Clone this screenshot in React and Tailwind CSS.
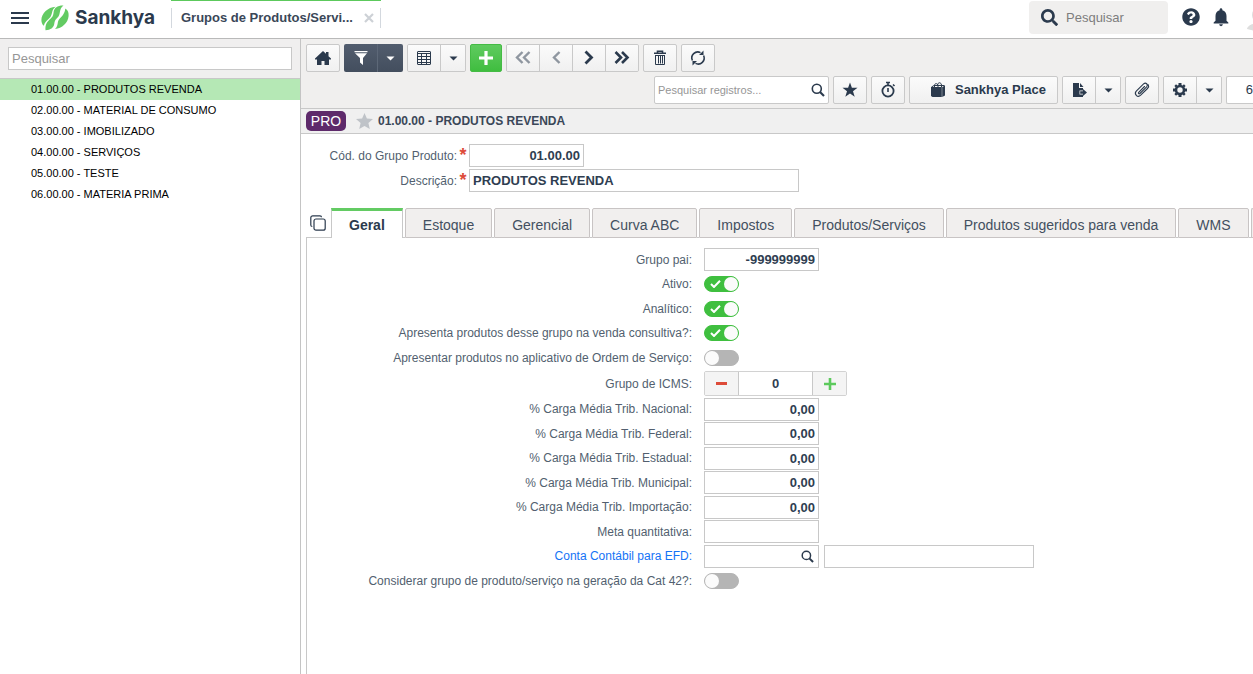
import React, { useState } from "react";
import { FaSearch, FaQuestionCircle } from "react-icons/fa";
import { MdNotifications } from "react-icons/md";

const INK = "#2b3a4d";

/* ---------- icons ---------- */

const Logo = () => (
  <svg width="28" height="26" viewBox="0 0 28 26" fill="#63cb63" aria-hidden="true">
    <path d="M14.500 1.800C7 2.200.4 8.500.4 15c0 2.600.8 4.400 2.400 5.800.8-4 3.700-5.800 6-8.100C12 9.500 9.800 5.500 14.500 1.800z" />
    <path d="M22.500.5C16.500.3 13.300 3 12.700 6.500c-.5 3.300-.3 4.600-3.200 7.200C6.300 16.600 4 19 4.500 25.300c5.300-.3 8-2.700 8.700-6 .6-3.200.6-4.200 3.400-6.800C20.200 9 17.300 4.500 22.500.5z" />
    <path d="M24.300 3.500c3 1.700 3.500 4.500 3.300 7.500-.6 7-6.500 12.300-13.600 13 4-3.500 1.500-7.200 4.800-10.500C21.500 10.700 23.800 8.500 24.300 3.500z" />
  </svg>
);

const Svg = ({ s = 18, children }) => (
  <svg width={s} height={s} viewBox="0 0 18 18" fill="none" stroke="currentColor" strokeWidth="2" aria-hidden="true">
    {children}
  </svg>
);

const HomeIcon = () => (
  <Svg>
    <path fill="currentColor" stroke="none" d="M9 2 12 4.800V3h2.500v4.200L17 9.500V10.500h-2V16h-4.500v-4h-3v4H3v-5.500H1V9.500z" />
  </Svg>
);
const FunnelIcon = () => (
  <Svg>
    <path fill="currentColor" stroke="none" d="M2.500 2h13v1.200h-13zM3 4.200h12L11 9v7l-3-2.500V9z" />
  </Svg>
);
const GridIcon = () => (
  <Svg>
    <rect x="2.500" y="2.500" width="13" height="13" rx="0.500" strokeWidth="1" />
    <path strokeWidth="1" d="M2.500 4.500h13M2.500 7.500h13M2.500 10.500h13M2.500 13.500h13M6.500 4.500v11M11.500 4.500v11" />
  </Svg>
);
const Caret = () => (
  <svg width="9" height="5" viewBox="0 0 9 5" fill="currentColor" aria-hidden="true">
    <path d="M0.500 0.500h8L4.500 4.500z" />
  </svg>
);
const PlusIcon = () => (
  <Svg>
    <path strokeWidth="3.200" d="M9 2v14M2 9h14" />
  </Svg>
);
const FirstIcon = () => (
  <Svg>
    <path strokeWidth="2.400" d="M8.500 3 3 8.500 8.500 14M15.500 3 10 8.500l5.500 5.500" />
  </Svg>
);
const PrevIcon = () => (
  <Svg>
    <path strokeWidth="2.400" d="M12.500 3 7 8.500l5.500 5.500" />
  </Svg>
);
const NextIcon = () => (
  <Svg>
    <path strokeWidth="2.800" d="m5.500 2.500 6 6-6 6" />
  </Svg>
);
const LastIcon = () => (
  <Svg>
    <path strokeWidth="2.600" d="M2.500 3 8 8.500 2.500 14M9 3l5.500 5.500L9 14" />
  </Svg>
);
const TrashIcon = () => (
  <Svg>
    <path strokeWidth="1.600" d="M3 4.300h12M6.500 4.500V2.300h5v2.200" />
    <path strokeWidth="1" d="M4.500 6v9.500h9V6M7.500 6.500v8M9.500 6.500v8M11.500 6.500v8M4 6.500h10" />
  </Svg>
);
const RefreshIcon = () => (
  <Svg>
    <path strokeWidth="1.600" d="M3.400 11.500A6 6 0 0 1 11.500 3.600M14.600 6.500A6 6 0 0 1 6.500 14.400" />
    <path fill="currentColor" stroke="none" d="M10 6h4.500V1.500zM8 12H3.500v4.500z" />
  </Svg>
);
const TimerIcon = () => (
  <Svg>
    <circle cx="9" cy="10" r="5.600" strokeWidth="1.800" />
    <path strokeWidth="1.600" d="M9 7v4M7 1.500h4M9 1.500v3M14 3.500l1.500 1.500" />
  </Svg>
);
const BagIcon = () => (
  <Svg>
    <path fill="currentColor" stroke="none" d="M2 6h10.800v10H3.500L2 15zM13.200 6 16 4.500v10L13.200 16z" />
    <path strokeWidth="1" d="M2.500 6 5 4.500h10.500M5.500 6V4.500C5.500 2 8.500 2 9 4.500V6M8.500 4C9 1 12 1 12.500 4v2" />
  </Svg>
);
const ExportIcon = () => (
  <Svg>
    <path fill="currentColor" stroke="none" d="M3 2h6v5h4v2.500H9.500v4H13v2.500H3zM10 2l3.500 4H10zM13 8l4 3.500-4 3.500v-2.300h-2.800v-2.400H13z" />
  </Svg>
);
const ClipIcon = () => (
  <Svg>
    <path
      strokeWidth="1.100"
      strokeLinecap="round"
      d="m11.500 5.500-5.800 5.800c-.8.800.3 2 1.200 1.200l6.700-6.700c2-2.200-.8-5-3-2.900L3.500 9.900c-3 3 1 7.200 4.200 4.300l6.800-6.700c1-1 1.500-2.500.8-3.700"
    />
  </Svg>
);
const GearIcon = () => (
  <Svg>
    <circle cx="9" cy="9" r="4" strokeWidth="2.600" />
    <path strokeWidth="3" d="M9 2v2.500M9 13.500V16M2 9h2.500M13.500 9H16" />
    <path strokeWidth="2.400" d="m4.200 4.200 1.500 1.500M12.300 12.300l1.500 1.500M13.800 4.200l-1.500 1.500M5.700 12.300l-1.500 1.500" />
  </Svg>
);
const LensIcon = ({ s = 14 }) => (
  <svg width={s} height={s} viewBox="0 0 14 14" fill="none" stroke={INK} aria-hidden="true">
    <circle cx="5.800" cy="5.800" r="4.500" strokeWidth="1.600" />
    <path strokeWidth="2.200" d="m9 9 4 4" />
  </svg>
);
const CopyIcon = () => (
  <svg width="16" height="16" viewBox="0 0 16 16" fill="none" stroke={INK} strokeWidth="1.200" aria-hidden="true">
    <rect x="4" y="4" width="11.200" height="11.200" rx="2" />
    <path d="M2.300 11.500C1.300 11.500.8 10.800.8 10V2.800c0-1.200.8-2 2-2H10c.9 0 1.500.6 1.500 1.500" />
  </svg>
);

/* ---------- building blocks ---------- */

const face = "flex items-center justify-center bg-linear-to-b from-[#fbfbfb] to-[#f0f0f0] text-[#2b3a4d]";

const Btn = ({ label, className = "w-[34px]", children }) => (
  <button type="button" aria-label={label} className={`${face} h-7 shrink-0 rounded-xs border border-[#c9c9c9] ${className}`}>
    {children}
  </button>
);

const SplitBtn = ({ label, children }) => (
  <div className="flex h-7 w-[59px] shrink-0 overflow-hidden rounded-xs border border-[#c9c9c9]">
    <button type="button" aria-label={label} className={`${face} w-[33px] border-r border-[#c9c9c9]`}>
      {children}
    </button>
    <button type="button" aria-label={`${label}: opções`} className={`${face} flex-1`}>
      <Caret />
    </button>
  </div>
);

const field = "h-[23px] border border-[#c8c8c8] bg-white px-[3px] text-[13px] font-bold text-[#2f3e51] outline-none";

const Toggle = ({ id, on }) => {
  const [checked, setChecked] = useState(on);
  return (
    <span className="relative flex h-4 w-[35px]">
      <input
        id={id}
        type="checkbox"
        role="switch"
        checked={checked}
        onChange={(e) => setChecked(e.target.checked)}
        className="peer h-4 w-[35px] appearance-none rounded-full border border-[#b5b5b5] bg-[#b5b5b5] checked:border-[#3fbf3f] checked:bg-[#3fbf3f]"
      />
      <span className="pointer-events-none absolute top-px left-px size-3.5 rounded-full bg-[#fbfbfb] peer-checked:left-5" />
      {checked && (
        <svg className="pointer-events-none absolute top-1 left-1.5" width="11" height="8" viewBox="0 0 11 8" fill="none" stroke="#fff" strokeWidth="2" aria-hidden="true">
          <path d="M1 4l3 3 6-6.300" />
        </svg>
      )}
    </span>
  );
};

const Row = ({ id, label, h = "h-6", link, children }) => (
  <div className={`flex items-center gap-3 ${h}`}>
    <label htmlFor={id} className={`w-[385px] shrink-0 text-right text-xs ${link ? "text-[#1473f6]" : "text-[#525f6f]"}`}>
      {label}
    </label>
    {children}
  </div>
);

const groups = [
  "01.00.00 - PRODUTOS REVENDA",
  "02.00.00 - MATERIAL DE CONSUMO",
  "03.00.00 - IMOBILIZADO",
  "04.00.00 - SERVIÇOS",
  "05.00.00 - TESTE",
  "06.00.00 - MATERIA PRIMA",
];

const tabs = ["Geral", "Estoque", "Gerencial", "Curva ABC", "Impostos", "Produtos/Serviços", "Produtos sugeridos para venda", "WMS"];

const rates = [
  ["nacional", "% Carga Média Trib. Nacional:", "h-6"],
  ["federal", "% Carga Média Trib. Federal:", "h-[25px]"],
  ["estadual", "% Carga Média Trib. Estadual:", "h-6"],
  ["municipal", "% Carga Média Trib. Municipal:", "h-[25px]"],
  ["importacao", "% Carga Média Trib. Importação:", "h-6"],
];

const Header = () => (
  <header className="flex h-[39px] shrink-0 items-start border-b border-[#b9b9b9] bg-white">
    <button type="button" aria-label="Menu" className="mt-3 ml-[11px] flex w-[18px] flex-col gap-[3px]">
      <span className="h-0.5 bg-[#2b3a4d]" />
      <span className="h-0.5 bg-[#2b3a4d]" />
      <span className="h-0.5 bg-[#2b3a4d]" />
    </button>
    <a href="#" className="mt-[5px] ml-3 flex h-[26px] w-[130px] shrink-0 items-center gap-1.5">
      <Logo />
      <span className="font-['Inter',sans-serif] text-[19px] leading-6 font-bold text-[#2b3a4d]">Sankhya</span>
    </a>
    <div className="flex h-9 w-[210px] shrink-0 border-t border-[#5cc95c]">
      <div className="mt-[7px] flex h-5 flex-1 items-center justify-between border-x border-[#d3d8de] pr-1.5 pl-[9px]">
        <span className="text-[13px] font-bold text-[#3a4758]">Grupos de Produtos/Servi...</span>
        <button type="button" aria-label="Fechar aba" className="text-[#cdd1d6]">
          <svg width="10" height="10" viewBox="0 0 10 10" stroke="currentColor" strokeWidth="2.200" aria-hidden="true">
            <path d="m1 1 8 8M9 1 1 9" />
          </svg>
        </button>
      </div>
    </div>
    <div className="ml-auto flex shrink-0 items-center text-[#2b3a4d]">
      <label className="mt-px flex h-[33px] w-[139px] items-center gap-2 rounded-sm bg-[#f0efee] pl-3">
        <FaSearch size={17} className="shrink-0" />
        <input placeholder="Pesquisar" aria-label="Pesquisar" className="w-24 bg-transparent text-[13px] outline-none placeholder:text-[#7d7d7d]" />
      </label>
      <button type="button" aria-label="Ajuda" className="ml-[14px]">
        <FaQuestionCircle size={18} />
      </button>
      <button type="button" aria-label="Notificações" className="ml-2.5">
        <MdNotifications size={22} />
      </button>
      <span className="ml-[15px] h-8 w-1.5 overflow-hidden">
        <svg width="26" height="32" viewBox="0 0 26 32" fill="#dedede" aria-hidden="true">
          <circle cx="13" cy="14" r="8" />
          <path d="M0 28c0-2 3-4.500 6-5h12c4 1 7 3 7 5l-12 3z" />
        </svg>
      </span>
    </div>
  </header>
);

const Sidebar = () => (
  <aside className="flex w-[301px] shrink-0 flex-col border-r border-[#c4c4c4] bg-white">
    <div className="flex h-10 items-center border-b border-[#c8c8c8] bg-[#f0efef] px-2">
      <input
        aria-label="Pesquisar grupos"
        placeholder="Pesquisar"
        className="h-[23px] w-full border border-[#c8c8c8] bg-white px-[3px] text-[13px] outline-none placeholder:text-[#969696]"
      />
    </div>
    <ul>
      {groups.map((g, i) => (
        <li key={g}>
          <a href="#" className={`block h-[21px] pl-[31px] text-[11px] leading-[21px] text-black ${i === 0 ? "bg-[#b5e8b5]" : ""}`}>
            {g}
          </a>
        </li>
      ))}
    </ul>
  </aside>
);

const Toolbar = () => (
  <div className="flex flex-col gap-1 border-b border-[#c8c8c8] bg-[#f0efee] pt-[5px] pb-1">
    <div className="flex gap-1 pl-[5px]">
      <Btn label="Início"><HomeIcon /></Btn>
      <div className="flex h-7 w-[59px] shrink-0 overflow-hidden rounded-xs bg-linear-to-b from-[#525d6e] to-[#434e5e] text-white">
        <button type="button" aria-label="Filtro" className="flex w-[34px] items-center justify-center border-r border-[#5d6878]"><FunnelIcon /></button>
        <button type="button" aria-label="Filtro: opções" className="flex flex-1 items-center justify-center"><Caret /></button>
      </div>
      <SplitBtn label="Modo grade"><GridIcon /></SplitBtn>
      <button type="button" aria-label="Adicionar" className="flex h-7 w-8 items-center justify-center rounded-xs border border-[#45bb45] bg-linear-to-b from-[#5fcb5f] to-[#3fbd3f] text-white">
        <PlusIcon />
      </button>
      <div className="flex h-7 w-[133px] shrink-0 divide-x divide-[#c9c9c9] overflow-hidden rounded-xs border border-[#c9c9c9]">
        <button type="button" disabled aria-label="Primeiro" className={`${face} flex-1`}><span className="opacity-50"><FirstIcon /></span></button>
        <button type="button" disabled aria-label="Anterior" className={`${face} flex-1`}><span className="opacity-50"><PrevIcon /></span></button>
        <button type="button" aria-label="Próximo" className={`${face} flex-1`}><NextIcon /></button>
        <button type="button" aria-label="Último" className={`${face} flex-1`}><LastIcon /></button>
      </div>
      <Btn label="Excluir"><TrashIcon /></Btn>
      <Btn label="Atualizar"><RefreshIcon /></Btn>
    </div>
    <div className="flex justify-end gap-1">
      <label className="flex h-7 w-[175px] shrink-0 items-center rounded-xs border border-[#c9c9c9] bg-white pr-[3px] pl-[3px]">
        <input aria-label="Pesquisar registros" placeholder="Pesquisar registros..." className="min-w-0 flex-1 text-[11px] outline-none placeholder:text-[#969696]" />
        <LensIcon />
      </label>
      <Btn label="Favorito">
        <Svg>
          <path fill="currentColor" stroke="none" d="m9 1.500 1.900 5.300h5.600l-4.500 3.400 1.700 5.500L9 12.400l-4.700 3.300L6 10.200 1.500 6.800h5.600z" />
        </Svg>
      </Btn>
      <Btn label="Cronômetro"><TimerIcon /></Btn>
      <Btn label="Sankhya Place" className="w-[149px] gap-2 pl-2">
        <BagIcon />
        <span className="text-[13px] font-bold">Sankhya Place</span>
      </Btn>
      <SplitBtn label="Exportar"><ExportIcon /></SplitBtn>
      <Btn label="Anexos"><ClipIcon /></Btn>
      <SplitBtn label="Configurações"><GearIcon /></SplitBtn>
      <div className="flex h-7 w-[27px] shrink-0 items-center justify-end rounded-l-xs border border-r-0 border-[#c9c9c9] bg-white text-[13px] text-[#2b3a4d]">6</div>
    </div>
  </div>
);

export default function App() {
  const [qty, setQty] = useState(0);
  return (
    <div className="flex min-h-screen flex-col overflow-hidden bg-white font-['Liberation_Sans',Arial,sans-serif]">
      <Header />
      <div className="flex flex-1">
        <Sidebar />
        <main className="flex min-w-0 flex-1 flex-col">
          <Toolbar />
          <div className="flex h-[25px] items-center border-b border-[#c8c8c8] bg-[#f0f0f0] pl-[5px]">
            <span className="flex h-5 w-10 items-center justify-center rounded-[5px] bg-[#5e2a6b] text-sm text-white">PRO</span>
            <button type="button" aria-label="Favoritar registro" className="ml-2.5 text-[#bfc3c8]">
              <svg width="17" height="17" viewBox="0 0 17 17" fill="currentColor" aria-hidden="true">
                <path d="m8.500 0 2.400 5.600 6.100.5-4.600 4 1.400 6-5.300-3.200-5.300 3.200 1.400-6L0 6.100l6.100-.5z" />
              </svg>
            </button>
            <h1 className="ml-[5px] text-xs font-bold text-[#3a4758]">01.00.00 - PRODUTOS REVENDA</h1>
          </div>

          <form className="flex flex-1 flex-col pt-2.5" onSubmit={(e) => e.preventDefault()}>
            <div className="flex flex-col gap-0.5">
              <div className="flex items-center">
                <label htmlFor="codigo" className="w-[156px] text-right text-xs text-[#525f6f]">Cód. do Grupo Produto:</label>
                <span className="w-3 text-center text-lg leading-[23px] font-bold text-[#dd4b39]">*</span>
                <input id="codigo" defaultValue="01.00.00" className={`${field} w-[115px] text-right`} />
              </div>
              <div className="flex items-center">
                <label htmlFor="descricao" className="w-[156px] text-right text-xs text-[#525f6f]">Descrição:</label>
                <span className="w-3 text-center text-lg leading-[23px] font-bold text-[#dd4b39]">*</span>
                <input id="descricao" defaultValue="PRODUTOS REVENDA" className={`${field} w-[330px]`} />
              </div>
            </div>

            <div className="mt-4 ml-[5px] flex overflow-hidden">
              <button type="button" aria-label="Duplicar" className="flex w-[25px] shrink-0 items-center border-b border-[#c8c8c8] pl-1"><CopyIcon /></button>
              <div role="tablist" className="flex min-w-0 flex-1">
                {tabs.map((t, i) => (
                  <React.Fragment key={t}>
                    <button
                      type="button"
                      role="tab"
                      aria-selected={i === 0}
                      className={
                        i === 0
                          ? "h-[30px] shrink-0 border-x border-t-3 border-x-[#c8c8c8] border-t-[#63cb63] bg-white px-[17px] text-sm font-bold text-[#2b3a4d]"
                          : "h-[30px] shrink-0 rounded-t-xs border border-[#c8c4c4] bg-[#f1efee] px-[17px] pt-1 text-sm text-[#434f60]"
                      }
                    >
                      {t}
                    </button>
                    <span className="w-0.5 shrink-0 border-b border-[#c8c8c8]" />
                  </React.Fragment>
                ))}
                <button type="button" role="tab" aria-selected={false} aria-label="Próxima aba" className="h-[30px] flex-1 rounded-tl-xs border border-r-0 border-[#c8c4c4] bg-[#f1efee]" />
              </div>
            </div>

            <section className="ml-[5px] flex flex-1 flex-col border-l border-[#c8c8c8] pt-[9px]">
              <Row id="pai" label="Grupo pai:" h="h-[25px]">
                <input id="pai" defaultValue="-999999999" className={`${field} w-[115px] text-right`} />
              </Row>
              <Row id="ativo" label="Ativo:"><Toggle id="ativo" on /></Row>
              <Row id="analitico" label="Analítico:" h="h-[25px]"><Toggle id="analitico" on /></Row>
              <Row id="venda" label="Apresenta produtos desse grupo na venda consultiva?:"><Toggle id="venda" on /></Row>
              <Row id="ordem" label="Apresentar produtos no aplicativo de Ordem de Serviço:" h="h-[25px]"><Toggle id="ordem" on={false} /></Row>
              <Row id="icms" label="Grupo de ICMS:" h="h-[27px]">
                <div className="flex h-[25px] w-[143px] overflow-hidden rounded-xs border border-[#d2d2d2]">
                  <button type="button" aria-label="Diminuir" onClick={() => setQty(qty - 1)} className="flex w-[33px] items-center justify-center bg-[#f4f4f4]">
                    <span className="h-[3px] w-[11px] bg-[#dd4b39]" />
                  </button>
                  <input id="icms" value={qty} onChange={(e) => setQty(Number(e.target.value) || 0)} className="w-[75px] border-x border-[#c8c8c8] bg-white text-center text-[13px] font-bold text-[#2f3e51] outline-none" />
                  <button type="button" aria-label="Aumentar" onClick={() => setQty(qty + 1)} className="flex w-[33px] items-center justify-center bg-[#f4f4f4]">
                    <svg width="12" height="12" viewBox="0 0 12 12" stroke="#5cc95c" strokeWidth="2.600" aria-hidden="true"><path d="M6 0v12M0 6h12" /></svg>
                  </button>
                </div>
              </Row>
              {rates.map(([id, label, h]) => (
                <Row key={id} id={id} label={label} h={h}>
                  <input id={id} defaultValue="0,00" className={`${field} w-[115px] text-right`} />
                </Row>
              ))}
              <Row id="meta" label="Meta quantitativa:" h="h-[25px]">
                <input id="meta" className={`${field} w-[115px]`} />
              </Row>
              <Row id="conta" label="Conta Contábil para EFD:" link>
                <div className="flex gap-[5px]">
                  <div className="flex h-[23px] w-[115px] items-center border border-[#c8c8c8] bg-white pr-1">
                    <input id="conta" className="min-w-0 flex-1 px-[3px] text-[13px] font-bold text-[#2f3e51] outline-none" />
                    <button type="button" aria-label="Pesquisar conta"><LensIcon s={13} /></button>
                  </div>
                  <input aria-label="Descrição da conta contábil" className={`${field} w-[210px]`} />
                </div>
              </Row>
              <Row id="cat42" label="Considerar grupo de produto/serviço na geração da Cat 42?:" h="h-[25px]"><Toggle id="cat42" on={false} /></Row>
            </section>
          </form>
        </main>
      </div>
    </div>
  );
}
